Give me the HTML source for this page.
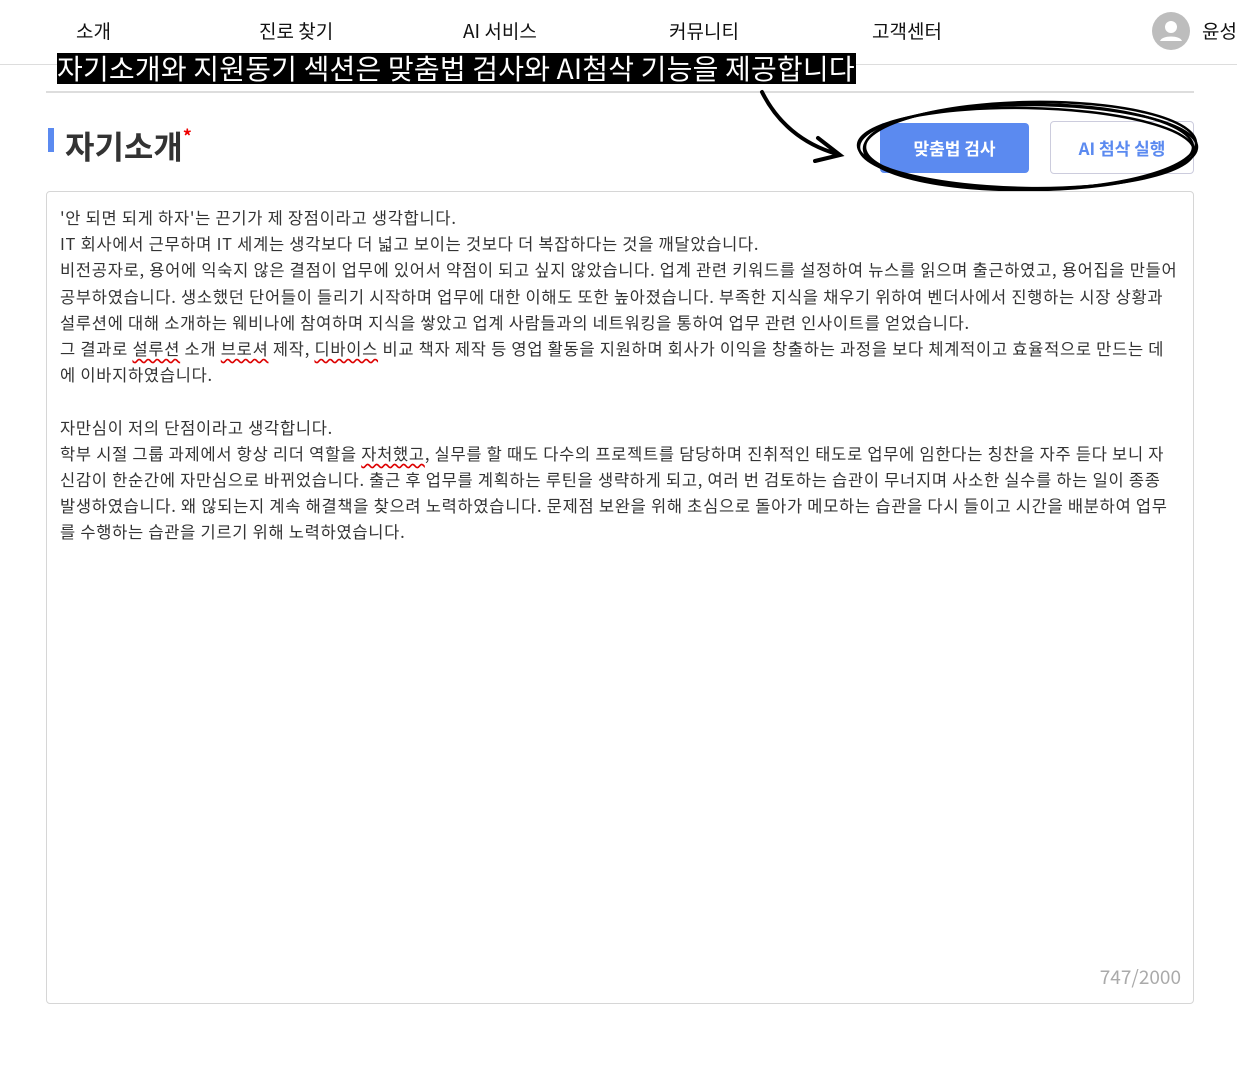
<!DOCTYPE html>
<html><head><meta charset="utf-8"><style>
body{margin:0;width:1237px;height:1065px;background:#fff;font-family:"Noto Sans CJK KR","Liberation Sans",sans-serif;position:relative;overflow:hidden;color:#222}
.nav{position:absolute;top:18px;font-size:19px;line-height:26px;color:#111}
.hr1{position:absolute;left:0;top:64px;width:1237px;height:1px;background:#ddd}
.banner{position:absolute;left:57px;top:53px;width:799px;height:31px;background:#000;color:#fff;font-size:28px;line-height:31px;white-space:nowrap;overflow:hidden;letter-spacing:0.2px}
.hr2{position:absolute;left:46px;top:91px;width:1148px;height:2px;background:#ddd}
.bar{position:absolute;left:48px;top:128px;width:6px;height:24px;background:#5b8af0}
.title{position:absolute;left:65px;top:118px;font-size:32px;font-weight:bold;color:#333;line-height:44px}
.title sup{color:#e00;font-size:18px;position:relative;top:-4px}
.b1{position:absolute;left:880px;top:123px;width:149px;height:50px;background:#5b8af0;border-radius:4px;color:#fff;font-size:17px;font-weight:bold;text-align:center;line-height:50px}
.b2{position:absolute;left:1050px;top:121px;width:142px;height:51px;border:1px solid #ccd;border-radius:4px;color:#5b8af0;font-size:17px;font-weight:bold;text-align:center;line-height:51px}
.box{position:absolute;left:46px;top:191px;width:1146px;height:811px;border:1px solid #d6d6d6;border-radius:4px}
.txt{position:absolute;left:60px;top:204px;width:1125px;font-size:16.5px;line-height:26.2px;color:#333;white-space:nowrap;letter-spacing:0.72px}
.w{text-decoration:underline wavy #d00;text-underline-offset:3px}
.cnt{position:absolute;right:56px;top:963px;font-size:19px;color:#aaa}
</style></head><body>
<div class="nav" style="left:76px">소개</div>
<div class="nav" style="left:259px">진로 찾기</div>
<div class="nav" style="left:463px">AI 서비스</div>
<div class="nav" style="left:669px">커뮤니티</div>
<div class="nav" style="left:872px">고객센터</div>
<svg style="position:absolute;left:1152px;top:12px" width="38" height="38" viewBox="0 0 38 38"><circle cx="19" cy="19" r="19" fill="#bdbdbd"/><circle cx="19" cy="15" r="6" fill="#fff"/><path d="M8 29c2-6 20-6 22 0z" fill="#fff"/></svg>
<div class="nav" style="left:1202px">윤성</div>
<div class="hr1"></div>
<div class="banner">자기소개와 지원동기 섹션은 맞춤법 검사와 AI첨삭 기능을 제공합니다</div>
<div class="hr2"></div>
<div class="bar"></div>
<div class="title">자기소개<sup>*</sup></div>
<div class="b1">맞춤법 검사</div>
<div class="b2">AI 첨삭 실행</div>
<svg style="position:absolute;left:0;top:0" width="1237" height="300" viewBox="0 0 1237 300">
<path d="M762 92c15 30 40 52 75 62M818 138l22 17-25 6" fill="none" stroke="#000" stroke-width="4" stroke-linecap="round"/>
<g fill="none" stroke="#000" stroke-width="2.5">
<ellipse cx="1028" cy="147" rx="169" ry="42"/>
<ellipse cx="1030" cy="146" rx="166" ry="44" transform="rotate(-1 1030 146)"/>
<ellipse cx="1026" cy="148" rx="168" ry="40" transform="rotate(1 1026 148)"/>
<ellipse cx="1029" cy="147" rx="164" ry="43"/>
</g></svg>
<div class="box"></div>
<div class="txt">'안 되면 되게 하자'는 끈기가 제 장점이라고 생각합니다.<br>IT 회사에서 근무하며 IT 세계는 생각보다 더 넓고 보이는 것보다 더 복잡하다는 것을 깨달았습니다.<br>비전공자로, 용어에 익숙지 않은 결점이 업무에 있어서 약점이 되고 싶지 않았습니다. 업계 관련 키워드를 설정하여 뉴스를 읽으며 출근하였고, 용어집을 만들어<br>공부하였습니다. 생소했던 단어들이 들리기 시작하며 업무에 대한 이해도 또한 높아졌습니다. 부족한 지식을 채우기 위하여 벤더사에서 진행하는 시장 상황과<br>설루션에 대해 소개하는 웨비나에 참여하며 지식을 쌓았고 업계 사람들과의 네트워킹을 통하여 업무 관련 인사이트를 얻었습니다.<br>그 결과로 <span class="w">설루션</span> 소개 <span class="w">브로셔</span> 제작, <span class="w">디바이스</span> 비교 책자 제작 등 영업 활동을 지원하며 회사가 이익을 창출하는 과정을 보다 체계적이고 효율적으로 만드는 데<br>에 이바지하였습니다.<br><br>자만심이 저의 단점이라고 생각합니다.<br>학부 시절 그룹 과제에서 항상 리더 역할을 <span class="w">자처했고</span>, 실무를 할 때도 다수의 프로젝트를 담당하며 진취적인 태도로 업무에 임한다는 칭찬을 자주 듣다 보니 자<br>신감이 한순간에 자만심으로 바뀌었습니다. 출근 후 업무를 계획하는 루틴을 생략하게 되고, 여러 번 검토하는 습관이 무너지며 사소한 실수를 하는 일이 종종<br>발생하였습니다. 왜 않되는지 계속 해결책을 찾으려 노력하였습니다. 문제점 보완을 위해 초심으로 돌아가 메모하는 습관을 다시 들이고 시간을 배분하여 업무<br>를 수행하는 습관을 기르기 위해 노력하였습니다.</div>
<div class="cnt">747/2000</div>
</body></html>
